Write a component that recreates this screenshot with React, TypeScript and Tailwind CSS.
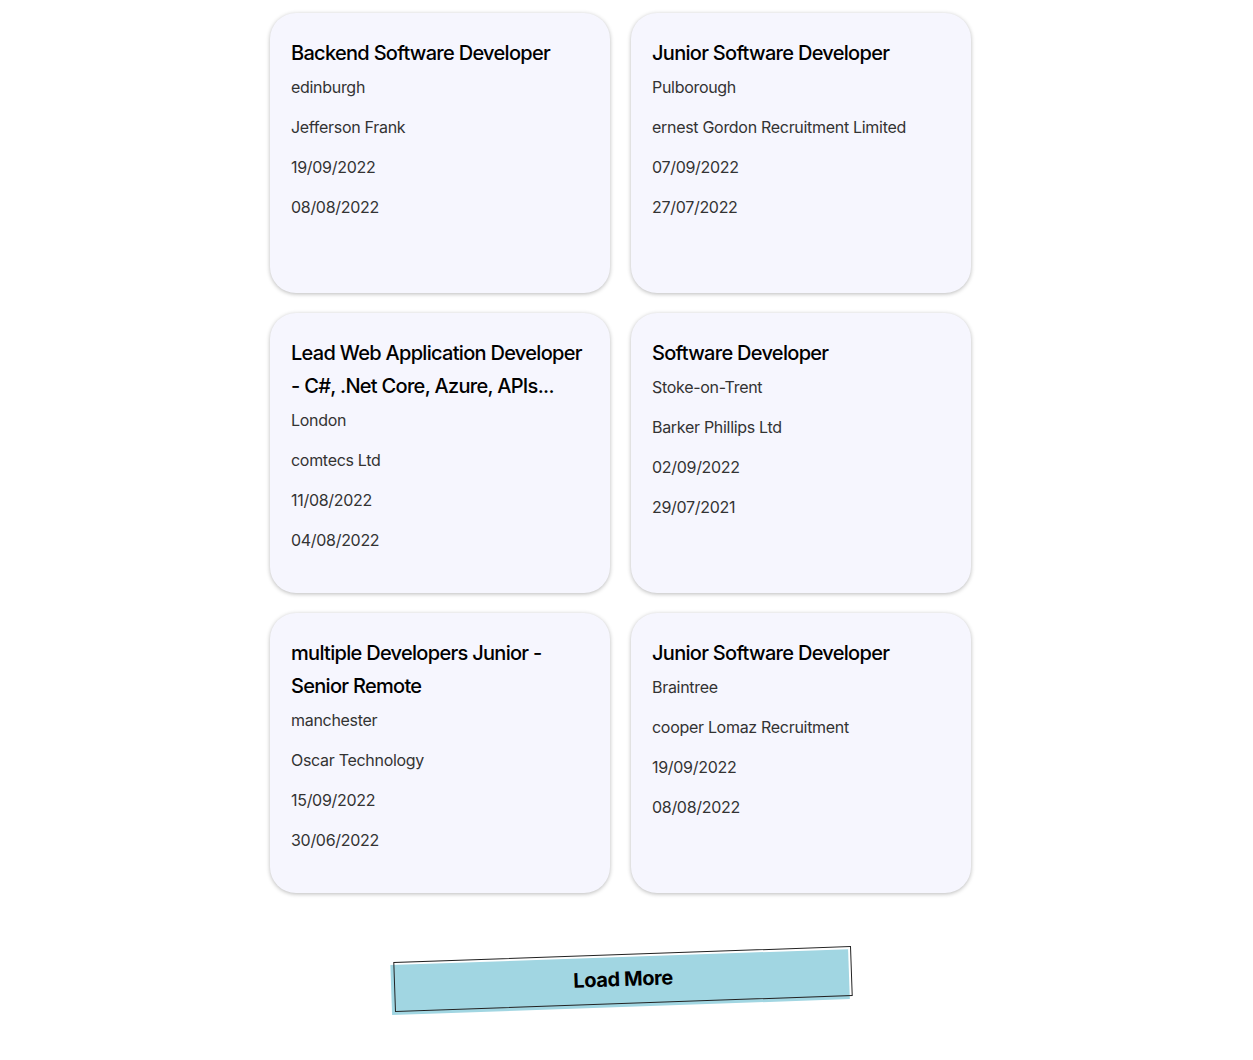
const jobs = [
  { title: 'Backend Software Developer', location: 'edinburgh', company: 'Jefferson Frank', posted: '19/09/2022', expires: '08/08/2022' },
  { title: 'Junior Software Developer', location: 'Pulborough', company: 'ernest Gordon Recruitment Limited', posted: '07/09/2022', expires: '27/07/2022' },
  { title: 'Lead Web Application Developer - C#, .Net Core, Azure, APIs...', location: 'London', company: 'comtecs Ltd', posted: '11/08/2022', expires: '04/08/2022' },
  { title: 'Software Developer', location: 'Stoke-on-Trent', company: 'Barker Phillips Ltd', posted: '02/09/2022', expires: '29/07/2021' },
  { title: 'multiple Developers Junior - Senior Remote', location: 'manchester', company: 'Oscar Technology', posted: '15/09/2022', expires: '30/06/2022' },
  { title: 'Junior Software Developer', location: 'Braintree', company: 'cooper Lomaz Recruitment', posted: '19/09/2022', expires: '08/08/2022' },
];

function JobCard({ job }: { job: (typeof jobs)[number] }) {
  return (
    <div className="h-[280px] rounded-[26px] bg-[#f6f6fe] shadow-[0_1px_4px_rgba(0,0,0,0.28)] px-[21px] pt-[24px]">
      <h3 className="text-[20px] leading-[33px] font-medium tracking-[-0.7px] text-black">{job.title}</h3>
      <div className="mt-[5px] flex flex-col gap-4 text-[16px] leading-6 tracking-[-0.3px] text-[#333]">
        <p>{job.location}</p>
        <p>{job.company}</p>
        <p>{job.posted}</p>
        <p>{job.expires}</p>
      </div>
    </div>
  );
}

export default function App() {
  return (
    <div className="min-h-[1060px] bg-white pt-[13px] font-['Inter',sans-serif]">
      <div className="ml-[270px] w-[701px] grid grid-cols-2 gap-x-[21px] gap-y-5">
        {jobs.map((j, i) => (
          <JobCard key={i} job={j} />
        ))}
      </div>

      <div className="ml-[394px] mt-[61px] w-[458px] -rotate-2">
        <div className="relative h-[50px]">
          <div className="absolute inset-0 -translate-x-[3px] translate-y-[3px] bg-[#a1d6e2]" />
          <button className="absolute inset-0 border border-[#222] flex items-center justify-center text-[20px] font-bold tracking-[-0.4px] text-black">
            Load More
          </button>
        </div>
      </div>
    </div>
  );
}
